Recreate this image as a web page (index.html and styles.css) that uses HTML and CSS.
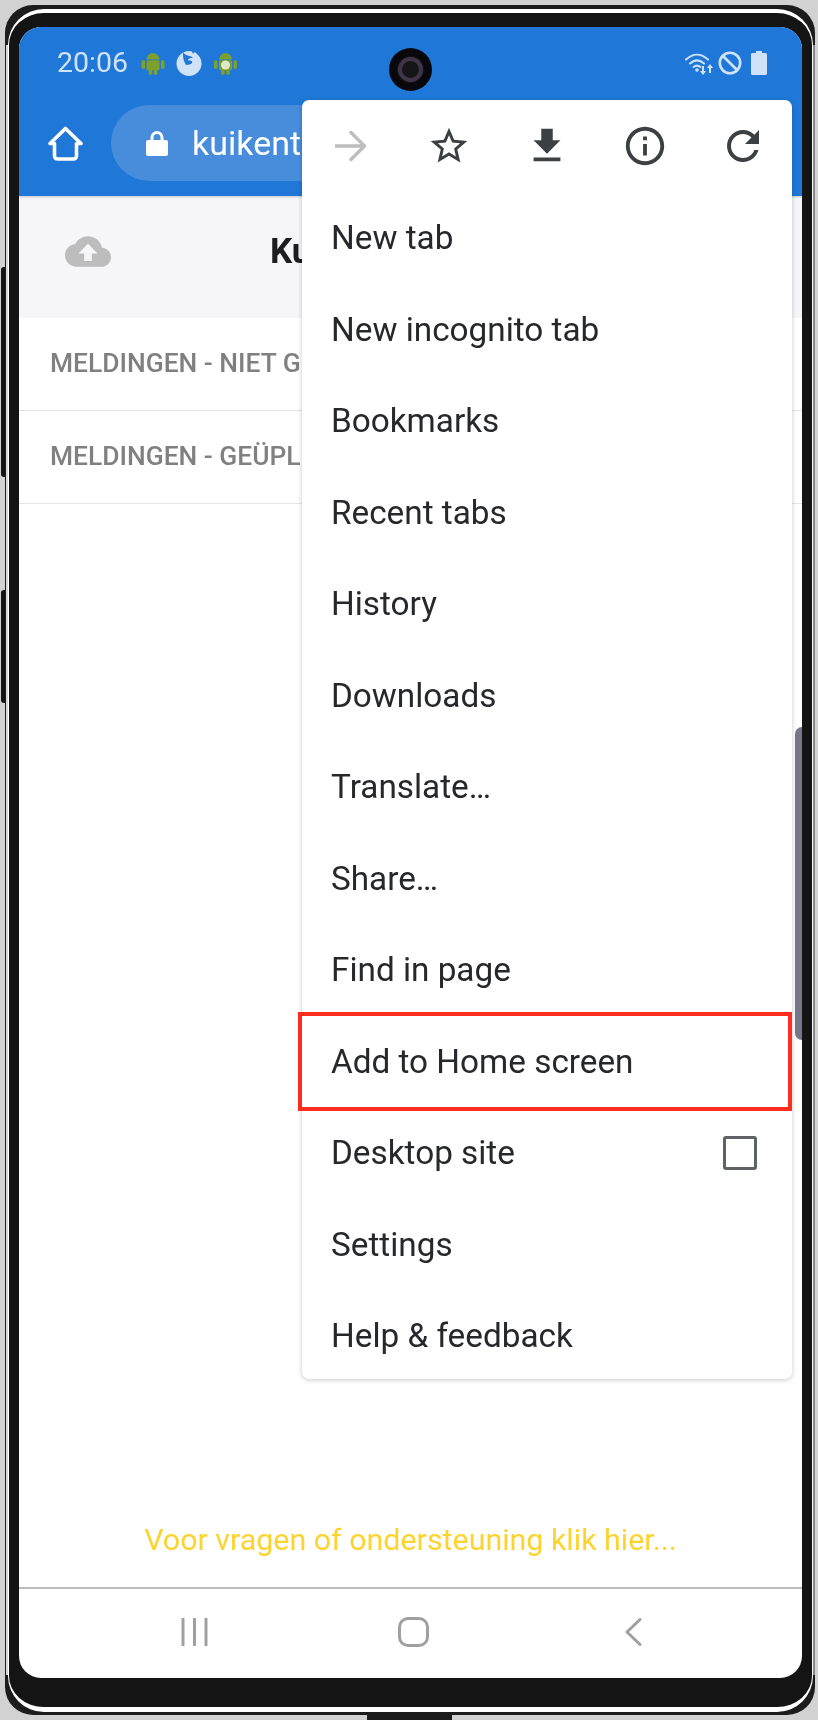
FILE: index.html
```html
<!DOCTYPE html>
<html lang="en">
<head>
<meta charset="utf-8">
<title>Add to Home screen</title>
<link rel="stylesheet" href="styles.css">
</head>
<body>
<div class="phone">
  <span class="side-btn side-btn-a"></span>
  <span class="side-btn side-btn-b"></span>
  <span class="bottom-port"></span>
  <div class="rim">
    <div class="bezel">
      <div class="screen">
        <div class="chrome">
          <div class="status">
            <div class="status-left">
              <span class="time">20:06</span>
              <svg class="ic-android" viewBox="0 0 24 25"><path d="M5.500 9.500a6.500 6.500 0 0 1 13 0z"/><rect x="5.500" y="10.300" width="13" height="10" rx="1.500"/><rect x="0.500" y="10" width="3.600" height="9" rx="1.800"/><rect x="19.900" y="10" width="3.600" height="9" rx="1.800"/><rect x="7.700" y="18" width="3.500" height="7" rx="1.700"/><rect x="12.800" y="18" width="3.500" height="7" rx="1.700"/></svg>
              <svg class="ic-fox" viewBox="0 0 26 26"><circle cx="13" cy="13.500" r="12.500"/><path class="fox-cut" d="M7 2c2 4 7 3.500 10 5.500-3 .5-5.500 1.500-5 3 3-.5 5.500.5 3.500 3-1.500 1.500-4 1-5.500 1.500C8 12 6.500 7 7 2zM15-1h5l-3 5z"/></svg>
              <svg class="ic-android ic-android-b" viewBox="0 0 24 25"><path d="M5.500 9.500a6.500 6.500 0 0 1 13 0z"/><rect x="5.500" y="10.300" width="13" height="10" rx="1.500"/><rect x="0.500" y="10" width="3.600" height="9" rx="1.800"/><rect x="19.900" y="10" width="3.600" height="9" rx="1.800"/><rect x="7.700" y="18" width="3.500" height="7" rx="1.700"/><rect x="12.800" y="18" width="3.500" height="7" rx="1.700"/><circle class="badge" cx="12" cy="15" r="4.500"/></svg>
            </div>
            <div class="status-right">
              <svg class="ic-wifi" viewBox="0 0 30 24"><path class="sb" d="M1 8.500c7-6.500 15-6.500 22 0M5 12.500c4.500-4 9.500-4 14 0M8.500 16c2.500-2 4.500-2 7 0"/><circle class="sf" cx="12" cy="19" r="1.800"/><path class="sf" d="M17 15h2v5h2l-3 4-3-4h2zM25 13l3 4h-2v5h-2v-5h-2z"/></svg>
              <svg class="ic-block" viewBox="0 0 24 24"><circle cx="12" cy="12" r="10.200"/><path d="M5 5l14 14"/></svg>
              <svg class="ic-batt" viewBox="0 0 16 24"><path d="M5 0h6v2h3.500a1.500 1.500 0 0 1 1.500 1.500V22.500a1.500 1.500 0 0 1-1.500 1.500H1.500A1.500 1.500 0 0 1 0 22.500V3.500A1.500 1.500 0 0 1 1.500 2H5z"/></svg>
            </div>
          </div>
          <div class="toolbar">
            <svg class="ic-home" viewBox="0 0 35 35"><path d="M17.500 2.500 33 17.500h-4.500v12.500a3 3 0 0 1-3 3h-16a3 3 0 0 1-3-3V17.500H2z"/></svg>
            <div class="omnibox">
              <svg class="ic-lock" viewBox="0 0 22 26"><path d="M4.500 11V7.500a6.500 6.500 0 0 1 13 0V11h-3V7.500a3.500 3.500 0 0 0-7 0V11z"/><rect x="0" y="10" width="22" height="16" rx="2"/></svg>
              <span class="url">kuikentoren.nl</span>
            </div>
          </div>
        </div>

        <div class="app-header">
          <svg class="ic-cloud" viewBox="0 4 24 16"><path fill-rule="evenodd" d="M19.350 10.040C18.670 6.590 15.640 4 12 4 9.110 4 6.600 5.640 5.350 8.040 2.340 8.360 0 10.910 0 14c0 3.310 2.690 6 6 6h13c2.760 0 5-2.240 5-5 0-2.640-2.050-4.780-4.650-4.960zM14 13v4h-4v-4H7l5-5 5 5h-3z"/></svg>
          <span class="app-title">Ku</span>
        </div>
        <div class="rows">
          <div class="row">MELDINGEN - NIET G</div>
          <div class="row">MELDINGEN - GEÜPL</div>
        </div>
        <div class="support">Voor vragen of ondersteuning klik hier...</div>
        <nav class="navbar">
          <svg class="ic-recents" viewBox="0 0 27 28"><path d="M2 1v26M13.500 1v26M25 1v26"/></svg>
          <span class="ic-homebtn"></span>
          <svg class="ic-back" viewBox="0 0 17 28"><path d="M15 1.500 2 14l13 12.500"/></svg>
        </nav>

        <span class="camera"><span class="camera-lens"></span></span>
        <span class="edge-handle"></span>

        <div class="menu">
          <div class="menu-icons">
            <svg class="mi mi-arrow" viewBox="0 0 32 32"><path d="M1 16h28M16 2.500 29.500 16 16 29.500"/></svg>
            <svg class="mi mi-star" viewBox="0 0 24 24"><path d="M22 9.240l-7.190-.62L12 2 9.190 8.630 2 9.240l5.460 4.730L5.820 21 12 17.270 18.180 21l-1.630-7.030L22 9.240zM12 15.400l-3.760 2.270 1-4.280-3.320-2.880 4.380-.38L12 6.100l1.710 4.040 4.380.38-3.320 2.880 1 4.280L12 15.400z"/></svg>
            <svg class="mi mi-dl" viewBox="0 0 24 24"><path d="M19 9h-4V3H9v6H5l7 7 7-7zM5 18v2h14v-2H5z"/></svg>
            <svg class="mi mi-info" viewBox="0 0 24 24"><path d="M11 7h2v2h-2zm0 4h2v6h-2zm1-9C6.480 2 2 6.480 2 12s4.480 10 10 10 10-4.480 10-10S17.520 2 12 2zm0 18c-4.410 0-8-3.590-8-8s3.590-8 8-8 8 3.590 8 8-3.590 8-8 8z"/></svg>
            <svg class="mi mi-reload" viewBox="0 0 24 24"><path d="M17.650 6.350C16.200 4.900 14.210 4 12 4c-4.420 0-7.990 3.580-7.990 8s3.570 8 7.990 8c3.730 0 6.840-2.550 7.730-6h-2.080c-.82 2.330-3.040 4-5.650 4-3.310 0-6-2.690-6-6s2.690-6 6-6c1.660 0 3.140.69 4.220 1.780L13 11h7V4l-2.350 2.350z"/></svg>
          </div>
          <div class="menu-item">New tab</div>
          <div class="menu-item">New incognito tab</div>
          <div class="menu-item">Bookmarks</div>
          <div class="menu-item">Recent tabs</div>
          <div class="menu-item">History</div>
          <div class="menu-item">Downloads</div>
          <div class="menu-item">Translate…</div>
          <div class="menu-item">Share…</div>
          <div class="menu-item">Find in page</div>
          <div class="menu-item menu-item-hl">Add to Home screen</div>
          <div class="menu-item">Desktop site<span class="checkbox"></span></div>
          <div class="menu-item">Settings</div>
          <div class="menu-item">Help &amp; feedback</div>
        </div>
      </div>
    </div>
  </div>
</div>
</body>
</html>
```
FILE: styles.css
```css
* { box-sizing: border-box; }

html, body {
  margin: 0;
  height: 1720px;
  overflow: hidden;
}

body {
  background: #d2d2d2;
  padding: 5px 3px 0 5px;
  font-family: Roboto, "Liberation Sans", sans-serif;
}

.phone {
  position: relative;
  width: 810px;
  height: 1710px;
  padding: 4px 2px 3px 3px;
  background:
    linear-gradient(#d8d8d8, #d8d8d8) 1px 40px / 2px calc(100% - 80px) no-repeat,
    linear-gradient(#8a8a8a, #8a8a8a) 100% 40px / 2px calc(100% - 80px) no-repeat,
    #1c1c1c;
  border-radius: 28px;
  filter: blur(0.45px);
}

.side-btn {
  position: absolute;
  left: -4px;
  width: 4px;
  background: #141414;
  border-radius: 3px 0 0 3px;
}
.side-btn-a { top: 262px; height: 210px; }
.side-btn-b { top: 585px; height: 113px; }

.bottom-port {
  position: absolute;
  left: 362px;
  bottom: -5px;
  width: 85px;
  height: 5px;
  background: #1c1c1c;
}

.rim {
  height: 100%;
  border-style: solid;
  border-color: #fff;
  border-width: 4px 1px 5px 1px;
  border-radius: 36px;
  background: #141414;
}

.bezel {
  height: 100%;
  padding: 14px 10px 29px 10px;
}

.screen {
  position: relative;
  display: flex;
  flex-direction: column;
  width: 783px;
  height: 1651px;
  background: #fff;
  border-radius: 22px;
  overflow: hidden;
}

/* browser chrome */
.chrome {
  flex: none;
  height: 169px;
  background: #1f78d8;
  box-shadow: 0 1px 2px rgba(0, 0, 0, .2);
  z-index: 1;
}

.status {
  display: flex;
  align-items: center;
  justify-content: space-between;
  height: 71px;
  padding: 0 35px 0 38px;
}

.status-left,
.status-right {
  display: flex;
  align-items: center;
}

.time {
  color: #cfe2f8;
  font-size: 28.500px;
  line-height: 34px;
  margin-right: 13px;
}

.ic-android {
  width: 24px;
  height: 25px;
  margin-right: 11px;
  fill: #7d9f2c;
}
.ic-android-b { width: 25px; margin-right: 0; }
.badge { fill: #dfe8c8; }

.ic-fox {
  width: 26px;
  height: 26px;
  margin-right: 11px;
  fill: #cfe2f8;
}
.fox-cut { fill: #1f78d8; }

.ic-wifi { width: 30px; height: 24px; margin-right: 3px; }
.sb { fill: none; stroke: #cfe2f8; stroke-width: 2; stroke-linecap: round; }
.sf { fill: #cfe2f8; }

.ic-block {
  width: 24px;
  height: 24px;
  margin-right: 9px;
  fill: none;
  stroke: #cfe2f8;
  stroke-width: 2.600;
}

.ic-batt { width: 16px; height: 24px; fill: #cfe2f8; }

.toolbar {
  display: flex;
  align-items: center;
  padding: 7px 0 0 29px;
}

.ic-home {
  flex: none;
  width: 35px;
  height: 35px;
  margin-right: 28px;
  fill: none;
  stroke: #fff;
  stroke-width: 3.600;
  stroke-linejoin: round;
}

.omnibox {
  display: flex;
  align-items: center;
  width: 640px;
  height: 76px;
  padding-left: 35px;
  background: #478ddc;
  border-radius: 38px;
}

.ic-lock { width: 22px; height: 26px; margin-right: 24px; fill: #fff; }

.url {
  color: #fff;
  font-size: 34px;
  line-height: 40px;
}

/* app content */
.app-header {
  flex: none;
  display: flex;
  align-items: center;
  height: 122px;
  padding: 0 0 11px 46px;
  background: #f6f6f8;
}

.ic-cloud { width: 46px; height: 31px; margin-right: 159px; fill: #bdbdbd; }

.app-title {
  color: #1d1d1f;
  font-size: 35px;
  font-weight: 700;
  white-space: nowrap;
}

.rows { flex: 1; }

.row {
  display: flex;
  align-items: center;
  height: 93px;
  padding: 0 0 2px 31px;
  color: #808080;
  font-size: 26.400px;
  font-weight: 500;
  border-bottom: 1.500px solid #e4e4e4;
  white-space: nowrap;
}

.support {
  flex: none;
  padding-bottom: 29px;
  color: #fdd42f;
  font-size: 30.400px;
  line-height: 36px;
  text-align: center;
}

.navbar {
  flex: none;
  display: flex;
  align-items: center;
  height: 91px;
  padding: 0 0 3px 162px;
  border-top: 2px solid #bcbcbc;
}

.ic-recents {
  width: 27px;
  height: 28px;
  margin-right: 190px;
  fill: none;
  stroke: #a0a0a0;
  stroke-width: 3;
  stroke-linecap: round;
}

.ic-homebtn {
  width: 31px;
  height: 30px;
  margin-right: 196px;
  border: 3.500px solid #a0a0a0;
  border-radius: 10px;
}

.ic-back {
  width: 17px;
  height: 28px;
  fill: none;
  stroke: #a0a0a0;
  stroke-width: 3;
  stroke-linecap: round;
  stroke-linejoin: round;
}

/* overlays */
.camera {
  position: absolute;
  z-index: 2;
  left: 370px;
  top: 21px;
  width: 43px;
  height: 43px;
  display: flex;
  align-items: center;
  justify-content: center;
  background: #08080c;
  border-radius: 50%;
}

.camera-lens {
  width: 25px;
  height: 25px;
  background: #16161a;
  border: 4px solid #3f3547;
  border-radius: 50%;
  box-shadow: 0 0 0 1px #17151c;
}

.edge-handle {
  position: absolute;
  z-index: 1;
  right: 0;
  top: 700px;
  width: 7px;
  height: 313px;
  background: #77778a;
  border-radius: 8px 0 0 8px;
}

.menu {
  position: absolute;
  z-index: 3;
  left: 283px;
  top: 73px;
  width: 490px;
  height: 1279px;
  background: #fff;
  border-radius: 7px;
  box-shadow: 0 1px 5px rgba(0, 0, 0, .22);
}

.menu-icons {
  display: grid;
  grid-template-columns: repeat(5, 98px);
  height: 92px;
  align-items: center;
  justify-items: center;
}

.mi { display: block; fill: #3c4043; }
.mi-arrow { width: 32px; height: 32px; fill: none; stroke: #bdbdbd; stroke-width: 3.400; stroke-linecap: round; stroke-linejoin: round; }
.mi-star { width: 44px; height: 44px; }
.mi-dl { width: 46px; height: 46px; }
.mi-info { width: 46px; height: 46px; }
.mi-reload { width: 48px; height: 48px; }

.menu-item {
  position: relative;
  display: flex;
  align-items: center;
  justify-content: space-between;
  height: 91.500px;
  padding: 0 35px 0 29px;
  color: #27282b;
  font-size: 33.300px;
}

.menu-item-hl::after {
  content: "";
  position: absolute;
  left: -4px;
  right: 0;
  top: -4px;
  bottom: -4px;
  border: 4.500px solid #ff2d20;
}

.checkbox {
  width: 34px;
  height: 34px;
  border: 3.500px solid #5f6368;
  border-radius: 3px;
}
```
